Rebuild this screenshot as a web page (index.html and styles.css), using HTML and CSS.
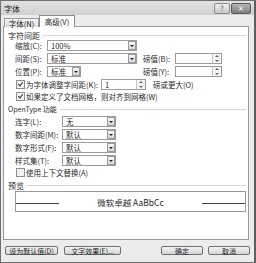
FILE: index.html
```html
<!DOCTYPE html>
<html lang="zh-CN">
<head>
  <meta charset="UTF-8">
  <title>字体</title>
  <link rel="stylesheet" href="styles.css">
</head>
<body>
  <div class="window">
    <div class="titlebar">
      <span class="title">字体</span>
      <span class="ctl help">?</span>
      <span class="ctl close">✕</span>
    </div>

    <div class="tabs">
      <span class="tab">字体(N)</span>
      <span class="tab active">高级(V)</span>
    </div>

    <div class="panel">
      <div class="group">字符间距</div>

      <div class="row">
        <span class="label">缩放(C):</span>
        <span class="select w90">100%<i class="drop"></i></span>
      </div>
      <div class="row">
        <span class="label">间距(S):</span>
        <span class="select w90">标准<i class="drop"></i></span>
        <span class="label pt">磅值(B):</span>
        <span class="spin w47"><i class="arrows"></i></span>
      </div>
      <div class="row">
        <span class="label">位置(P):</span>
        <span class="select w34">标准<i class="drop"></i></span>
        <span class="label pt far">磅值(Y):</span>
        <span class="spin w47"><i class="arrows"></i></span>
      </div>
      <div class="row check tight">
        <span class="box on"></span>
        <span class="ctext kern">为字体调整字间距(K):</span>
        <span class="spin w45">1<i class="arrows"></i></span>
        <span class="after">磅或更大(O)</span>
      </div>
      <div class="row check">
        <span class="box on"></span>
        <span class="ctext">如果定义了文档网格，则对齐到网格(W)</span>
      </div>

      <div class="group ot">OpenType 功能</div>

      <div class="row">
        <span class="label wide">连字(L):</span>
        <span class="select w54">无<i class="drop"></i></span>
      </div>
      <div class="row">
        <span class="label wide">数字间距(M):</span>
        <span class="select w54">默认<i class="drop"></i></span>
      </div>
      <div class="row">
        <span class="label wide">数字形式(F):</span>
        <span class="select w54">默认<i class="drop"></i></span>
      </div>
      <div class="row tight">
        <span class="label wide">样式集(T):</span>
        <span class="select w54">默认<i class="drop"></i></span>
      </div>
      <div class="row check">
        <span class="box"></span>
        <span class="ctext">使用上下文替换(A)</span>
      </div>

      <div class="group pv">预览</div>
      <div class="preview">
        <span class="rule"></span>
        <span class="sample">微软卓越 AaBbCc</span>
        <span class="rule"></span>
      </div>
    </div>

    <div class="buttons">
      <span class="btn b1">设为默认值(D)</span>
      <span class="btn b2">文字效果(E)...</span>
      <span class="btn b3">确定</span>
      <span class="btn b4">取消</span>
    </div>
  </div>
</body>
</html>
```

FILE: styles.css
```css
body {
  margin: 0;
  background: #ffffff;
}

.window {
  width: 256px;
  height: 263px;
  box-sizing: border-box;
  border: 1px solid #707070;
  border-right: 2px solid #5e5e5e;
  background: #ececec;
  padding: 0 2px;
  font-family: "Noto Sans CJK SC", "DejaVu Sans", sans-serif;
  font-size: 8px;
  color: #2a2a2a;
  overflow: hidden;
}

.titlebar {
  height: 14px;
  display: flex;
  align-items: center;
  margin: 0 -2px;
  padding: 0 3px 0 3px;
  background: linear-gradient(#e2e2e2, #d0d0d0);
}

.title {
  flex: 1;
  font-size: 8px;
  color: #1a1a1a;
}

.ctl {
  height: 9px;
  display: flex;
  align-items: center;
  justify-content: center;
  border: 1px solid #8a8a8a;
  border-radius: 2px;
  font-size: 7px;
  line-height: 1;
}

.help {
  width: 14px;
  background: linear-gradient(#f0f0f0, #c8c8c8);
  color: #555;
}

.close {
  width: 18px;
  margin-left: 1px;
  background: linear-gradient(#b4b4b4, #7e7e7e);
  color: #fff;
  border-color: #5a5a5a;
}

.tabs {
  height: 12px;
  display: flex;
  align-items: flex-end;
  padding-left: 1px;
  margin-bottom: -1px;
}

.tab {
  height: 8px;
  width: 33px;
  display: flex;
  align-items: center;
  justify-content: center;
  border: 1px solid #9a9a9a;
  border-bottom: none;
  background: linear-gradient(#f4f4f4, #dedede);
  font-size: 7.5px;
}

.tab.active {
  height: 11px;
  width: 34px;
  background: #fff;
  z-index: 1;
  border-color: #8a8a8a;
}

.panel {
  height: 214px;
  box-sizing: border-box;
  width: 246px;
  border: 1px solid #9a9a9a;
  background: #fff;
  padding-top: 3px;
}

.group {
  height: 10px;
  display: flex;
  align-items: center;
  padding: 0 2px 0 4px;
  font-size: 8px;
}

.group::after {
  content: "";
  flex: 1;
  height: 1px;
  margin-left: 3px;
  background: #d8d8d8;
}

.group.ot {
  margin-top: 1px;
  margin-bottom: 2px;
  font-size: 7px;
}

.group.pv {
  margin-bottom: 1px;
}

.row {
  height: 11px;
  display: flex;
  align-items: center;
  padding-left: 11px;
  margin-bottom: 2px;
}

.row.tight {
  margin-bottom: 1px;
}

.label {
  width: 32px;
  flex: none;
  font-size: 7.5px;
}

.label.wide {
  width: 47px;
}

.label.pt {
  margin-left: 6px;
}

.label.far {
  margin-left: 62px;
}

.select,
.spin {
  height: 11px;
  box-sizing: border-box;
  border: 1px solid #9c9c9c;
  display: flex;
  align-items: center;
  padding-left: 3px;
  font-size: 7.5px;
  background: #fff;
}

.w90 { width: 90px; }
.w34 { width: 34px; }
.w47 { width: 47px; }
.w45 { width: 45px; }
.w54 { width: 54px; }

.drop {
  margin-left: auto;
  width: 8px;
  height: 9px;
  box-sizing: border-box;
  border: 1px solid #9a9a9a;
  background: linear-gradient(#f6f6f6, #d8d8d8);
  position: relative;
}

.drop::after {
  content: "";
  position: absolute;
  left: 1px;
  top: 3px;
  border-left: 2px solid transparent;
  border-right: 2px solid transparent;
  border-top: 2px solid #222;
}

.spin .arrows {
  margin-left: auto;
  width: 9px;
  height: 9px;
  box-sizing: border-box;
  border-left: 1px solid #c4c4c4;
  background: #f3f3f3;
  position: relative;
}

.spin .arrows::before,
.spin .arrows::after {
  content: "";
  position: absolute;
  left: 2px;
  border-left: 2px solid transparent;
  border-right: 2px solid transparent;
}

.spin .arrows::before {
  top: 1px;
  border-bottom: 2px solid #666;
}

.spin .arrows::after {
  bottom: 1px;
  border-top: 2px solid #666;
}

.row.check {
  padding-left: 12px;
}

.box {
  width: 7px;
  height: 7px;
  flex: none;
  border: 1px solid #8e8e8e;
  background: #f2f2f2;
  margin-right: 1px;
  position: relative;
}

.box.on::after {
  content: "";
  position: absolute;
  left: 2px;
  top: 0;
  width: 2px;
  height: 4px;
  border: solid #333;
  border-width: 0 1px 1px 0;
  transform: rotate(40deg);
}

.ctext {
  font-size: 7.5px;
  white-space: nowrap;
}

.ctext.kern {
  width: 75px;
  flex: none;
}

.after {
  margin-left: 7px;
  font-size: 7.5px;
}

.preview {
  margin-left: 11px;
  width: 231px;
  height: 21px;
  box-sizing: border-box;
  border: 1px solid #9a9a9a;
  display: flex;
  align-items: center;
}

.rule {
  width: 43px;
  height: 1px;
  background: #444;
  margin-top: 4px;
}

.sample {
  flex: 1;
  text-align: center;
  font-size: 8.5px;
}

.buttons {
  display: flex;
  margin-top: 6px;
  padding-left: 2px;
}

.btn {
  height: 9px;
  box-sizing: border-box;
  display: flex;
  align-items: center;
  justify-content: center;
  border: 1px solid #707070;
  border-radius: 2px;
  background: linear-gradient(#f4f4f4, #d4d4d4);
  font-size: 7px;
}

.b1 { width: 53px; }
.b2 { width: 57px; margin-left: 6px; }
.b3 { width: 42px; margin-left: 40px; }
.b4 { width: 42px; margin-left: 5px; }
```
